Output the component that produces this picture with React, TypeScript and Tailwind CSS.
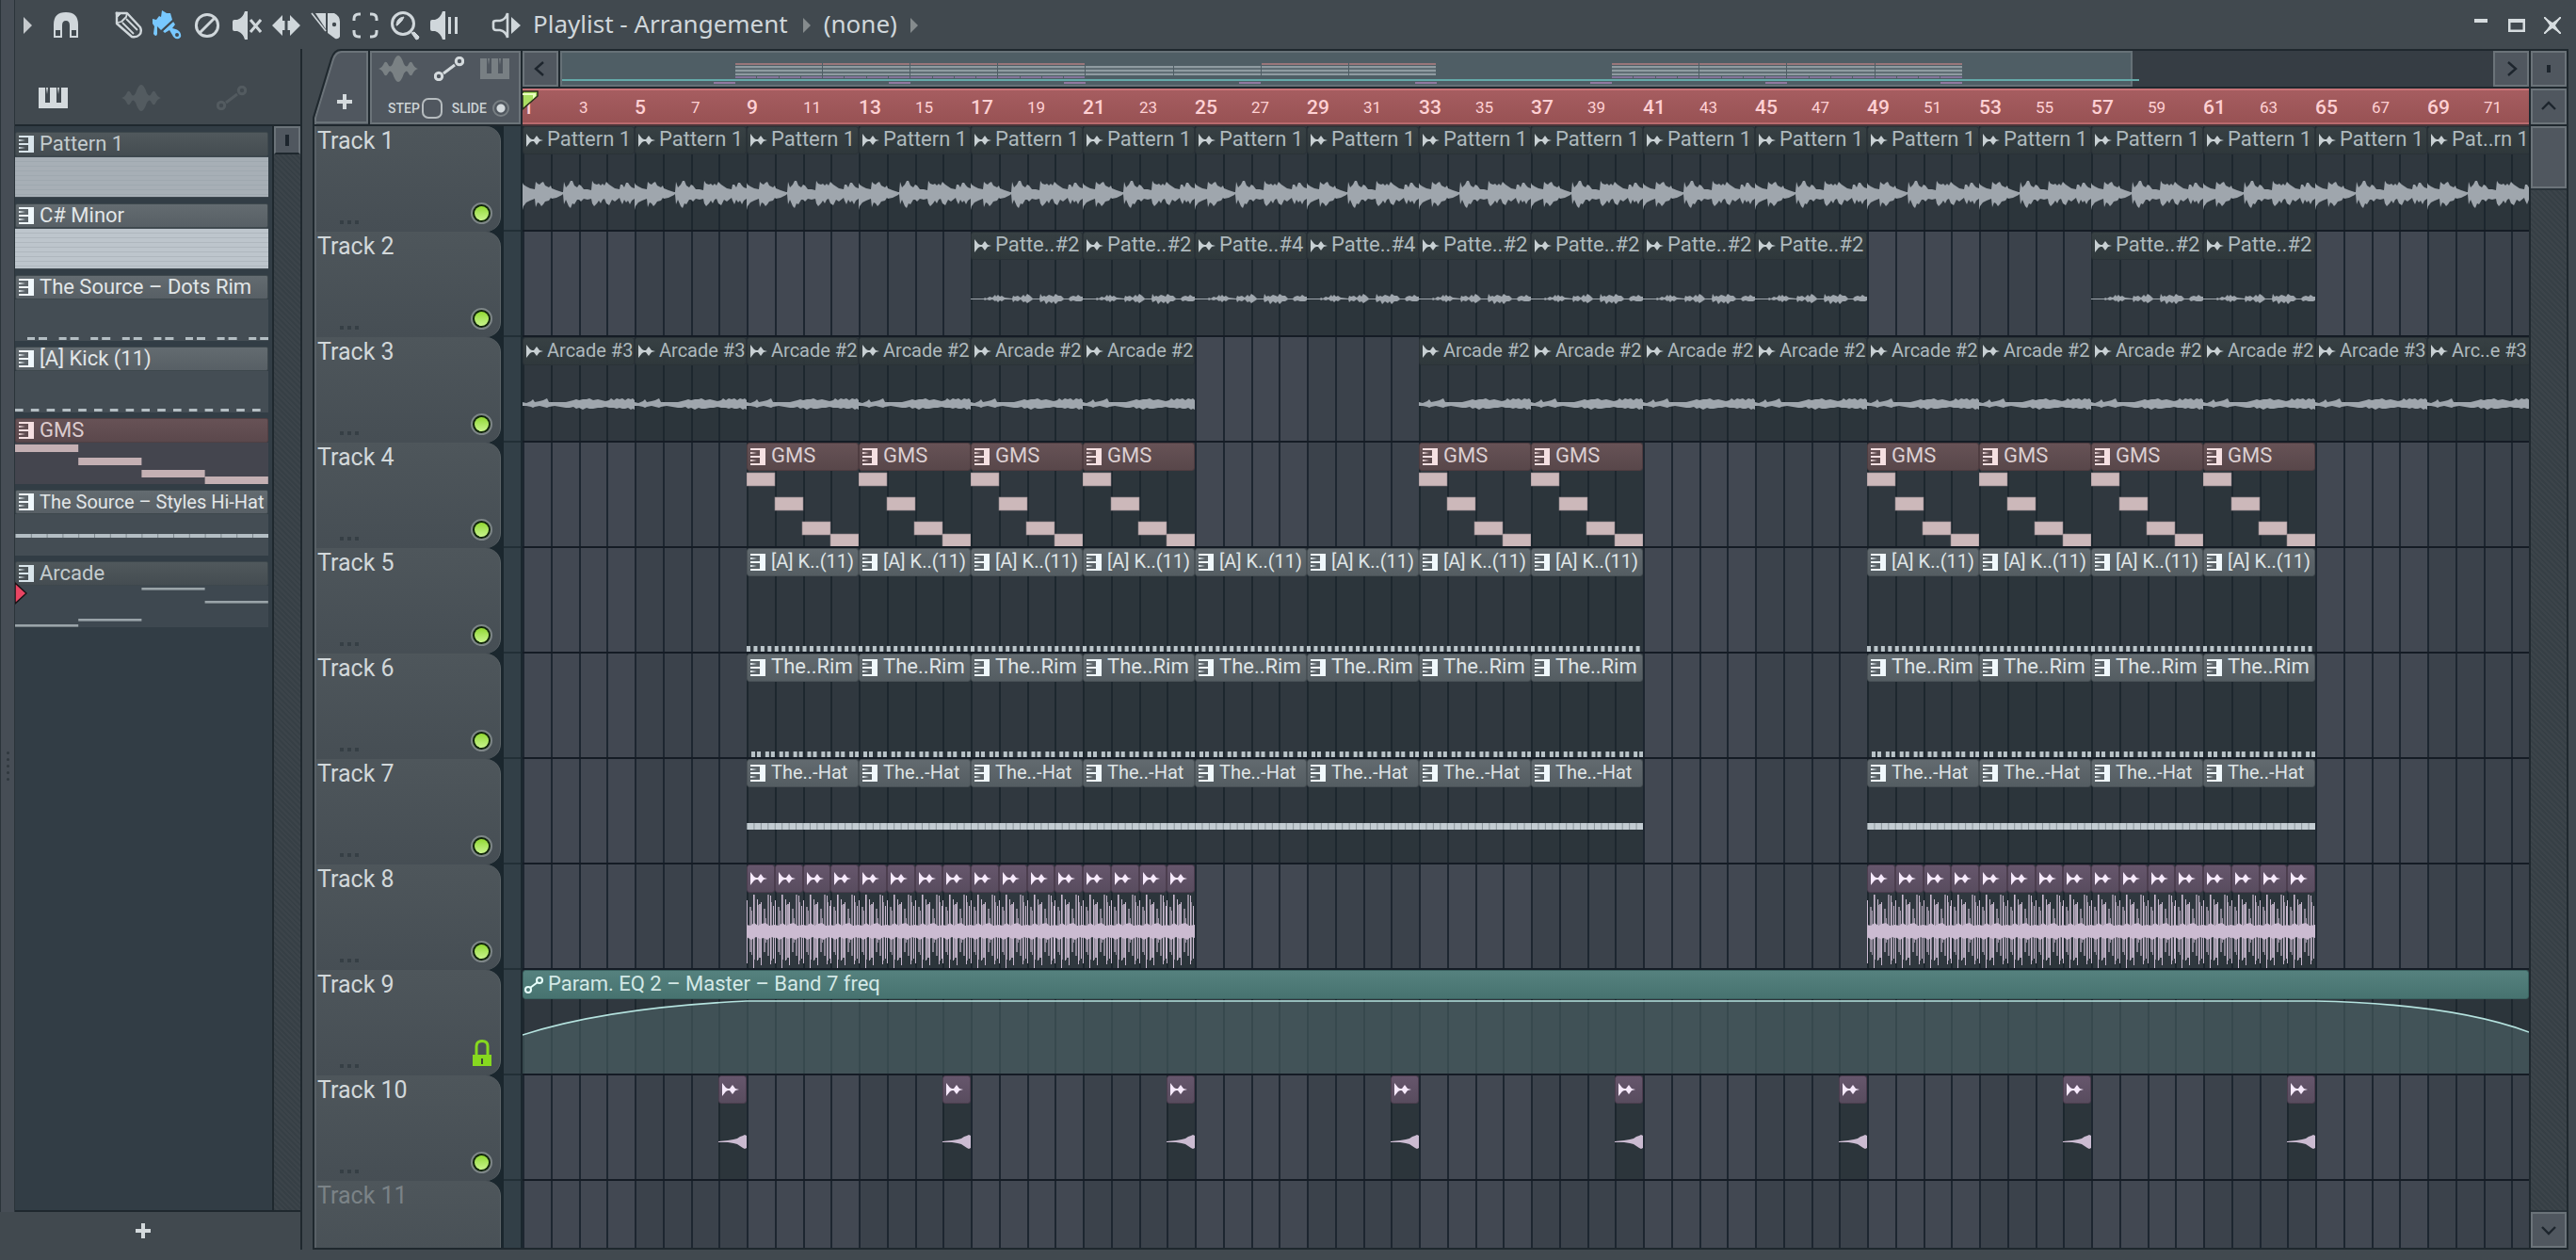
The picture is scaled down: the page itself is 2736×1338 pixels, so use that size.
import type { ReactNode } from "react";
import clsx from "clsx";

type ClipKind = "audio" | "audioPink" | "pattern" | "gms" | "sweep";
type Art = "wave1" | "wave2" | "wave3" | "gms" | "kick" | "rim" | "hat" | "perc" | "riser";

interface Clip {
  bar: number;
  bars: number;
  label?: string;
}

interface Track {
  name: string;
  kind?: ClipKind;
  art?: Art;
  clips: Clip[];
  locked?: boolean;
  dim?: boolean;
  small?: boolean;
}

// four bars are 119px wide
const barX = (bar: number) => Math.round(((bar - 1) * 119) / 4);

const run = (from: number, to: number, label?: string, step = 4): Clip[] => {
  const clips: Clip[] = [];
  for (let bar = from; bar <= to; bar += step) clips.push({ bar, bars: step, label });
  return clips;
};

const RISER_BARS = [8, 16, 24, 32, 40, 48, 56, 64];

const TRACKS: Track[] = [
  {
    name: "Track 1",
    kind: "audio",
    art: "wave1",
    clips: [...run(1, 65, "Pattern 1"), ...run(69, 69, "Pat..rn 1")],
  },
  {
    name: "Track 2",
    kind: "audio",
    art: "wave2",
    clips: [
      ...run(17, 21, "Patte..#2"),
      ...run(25, 29, "Patte..#4"),
      ...run(33, 45, "Patte..#2"),
      ...run(57, 61, "Patte..#2"),
    ],
  },
  {
    name: "Track 3",
    kind: "audio",
    art: "wave3",
    small: true,
    clips: [
      ...run(1, 5, "Arcade #3"),
      ...run(9, 21, "Arcade #2"),
      ...run(33, 61, "Arcade #2"),
      ...run(65, 65, "Arcade #3"),
      ...run(69, 69, "Arc..e #3"),
    ],
  },
  {
    name: "Track 4",
    kind: "gms",
    art: "gms",
    clips: [...run(9, 21, "GMS"), ...run(33, 37, "GMS"), ...run(49, 61, "GMS")],
  },
  {
    name: "Track 5",
    kind: "pattern",
    art: "kick",
    small: true,
    clips: [...run(9, 37, "[A] K..(11)"), ...run(49, 61, "[A] K..(11)")],
  },
  {
    name: "Track 6",
    kind: "pattern",
    art: "rim",
    clips: [...run(9, 37, "The..Rim"), ...run(49, 61, "The..Rim")],
  },
  {
    name: "Track 7",
    kind: "pattern",
    art: "hat",
    small: true,
    clips: [...run(9, 37, "The..-Hat"), ...run(49, 61, "The..-Hat")],
  },
  {
    name: "Track 8",
    kind: "audioPink",
    art: "perc",
    clips: [...run(9, 24, undefined, 1), ...run(49, 64, undefined, 1)],
  },
  { name: "Track 9", kind: "sweep", clips: [], locked: true },
  {
    name: "Track 10",
    kind: "audioPink",
    art: "riser",
    clips: RISER_BARS.map((bar) => ({ bar, bars: 1 })),
  },
  { name: "Track 11", clips: [], dim: true },
];

const PATTERNS = [
  { name: "Pattern 1", tone: "dull", art: "solidDark" },
  { name: "C# Minor", tone: "bright", art: "solidLight" },
  { name: "The Source – Dots Rim", tone: "bright", art: "rim" },
  { name: "[A] Kick (11)", tone: "bright", art: "kick" },
  { name: "GMS", tone: "gms", art: "gms" },
  { name: "The Source – Styles Hi-Hat", tone: "bright", art: "hat", small: true },
  { name: "Arcade", tone: "dull", art: "arcade", selected: true },
];

/* ---------- wave forms ---------- */

// [x, above, below] for one four-bar clip
type Env = [number, number, number][];

const ENV_1: Env = [
  [0, 11, 18], [1, 9, 14], [4, 7, 10], [8, 5, 8], [13, 4, 6], [14, 12, 15], [16, 10, 10], [18, 9, 11],
  [20, 11, 14], [22, 12, 12], [24, 8, 9], [28, 6, 8], [30, 8, 5], [31, 5, 6], [36, 3, 5], [42, 1, 2],
  [43, 1, 1], [44, 12, 12], [46, 6, 7], [49, 9, 14], [51, 13, 16], [53, 13, 11], [55, 8, 12], [58, 6, 7],
  [60, 9, 7], [62, 8, 9], [65, 4, 6], [69, 4, 7], [73, 3, 6], [74, 13, 11], [76, 10, 14], [79, 9, 11],
  [81, 10, 8], [83, 8, 11], [85, 10, 7], [87, 8, 6], [89, 12, 11], [92, 9, 13], [95, 7, 7], [98, 5, 9],
  [103, 4, 5], [104, 9, 8], [106, 9, 12], [108, 6, 7], [110, 11, 10], [112, 11, 8], [114, 8, 12],
  [116, 6, 8], [119, 5, 6],
];

const ENV_2: Env = [
  [0, 0, 1], [14, 0, 1], [15, 1, 2], [17, 0, 1], [20, 2, 2], [23, 1, 1], [26, 4, 3], [27, 2, 2], [29, 4, 4],
  [31, 2, 2], [33, 3, 3], [36, 1, 1], [44, 0, 1], [45, 3, 4], [47, 2, 2], [50, 3, 3], [53, 1, 1], [56, 4, 4],
  [58, 2, 3], [60, 5, 5], [63, 3, 3], [66, 0, 1], [73, 0, 1], [74, 5, 4], [76, 2, 3], [78, 3, 2], [80, 2, 6],
  [83, 4, 3], [86, 3, 5], [88, 2, 3], [90, 5, 6], [93, 3, 3], [96, 3, 3], [99, 0, 1], [104, 0, 1],
  [106, 2, 3], [109, 3, 2], [112, 2, 3], [114, 4, 3], [117, 2, 3], [119, 2, 2],
];

const ENV_3: Env = [
  [0, 2, 2], [4, 1, 2], [9, 3, 3], [11, 5, 4], [13, 2, 3], [18, 3, 2], [22, 4, 3], [26, 6, 4], [28, 2, 3],
  [34, 2, 2], [40, 2, 3], [46, 2, 4], [50, 3, 4], [54, 4, 3], [57, 5, 5], [60, 4, 4], [64, 5, 6], [68, 5, 4],
  [71, 6, 5], [75, 4, 5], [80, 5, 4], [84, 4, 4], [88, 3, 3], [92, 4, 4], [94, 6, 4], [97, 4, 4], [100, 6, 5],
  [103, 5, 4], [106, 6, 5], [109, 4, 5], [112, 6, 4], [115, 5, 6], [117, 6, 5], [119, 4, 6],
];

const envPath = (env: Env, mid: number) =>
  "M" +
  env.map(([x, up]) => `${x} ${mid - up}`).join("L") +
  "L" +
  [...env].reverse().map(([x, , down]) => `${x} ${mid + down}`).join("L") +
  "Z";

// [x, width, above, below, opacity] for one bar of track 8
const SPIKES = [
  [0, 1, 33, 34, 1], [3, 2, 26, 22, 0.6], [5, 1, 22, 25, 0.7], [7, 1, 39, 40, 1], [8, 1, 39, 30, 0.6],
  [11, 1, 34, 31, 1], [12, 1, 28, 30, 0.6], [13, 2, 29, 28, 0.8], [15, 1, 31, 36, 1], [18, 2, 24, 22, 0.6],
  [20, 1, 14, 12, 0.7], [22, 2, 39, 26, 0.6], [25, 1, 38, 35, 1], [26, 1, 31, 31, 0.6], [28, 1, 27, 29, 1],
];

const steps = (n: number) => Array.from({ length: n }, (_, i) => i);

function ClipArt({ art }: { art: Art }) {
  const one = art === "perc" || art === "riser";
  return (
    <svg
      viewBox={one ? "0 0 30 82" : "0 0 119 82"}
      className={one ? "block h-[82px] w-[30px]" : "block h-[82px] w-[119px]"}
      aria-hidden="true"
    >
      {art === "wave1" && <path d={envPath(ENV_1, 41)} fill="#9fa6ad" />}
      {art === "wave2" && <path d={envPath(ENV_2, 41)} fill="#9fa6ad" />}
      {art === "wave3" && <path d={envPath(ENV_3, 41)} fill="#9fa6ad" />}
      {art === "gms" &&
        [2, 28, 54, 67].map((y, i) => (
          <rect key={y} x={i * 30 - (i > 1 ? 1 : 0)} y={y} width="30" height="14" fill="#ccb8ba" stroke="#8d8186" strokeWidth=".6" />
        ))}
      {art === "kick" &&
        steps(16).map((i) => <rect key={i} x={(i * 119) / 16} y="74" width="4" height="7" fill="#bcc6cb" />)}
      {art === "rim" &&
        steps(8).map((i) => (
          <g key={i} fill="#b9c3c8">
            <rect x={5 + (i * 119) / 8} y="74" width="4" height="7" />
            <rect x={11 + (i * 119) / 8} y="74" width="4" height="7" />
          </g>
        ))}
      {art === "hat" && (
        <>
          <rect y="38" width="119" height="7" fill="#c3ccd2" />
          {steps(16).map((i) => (
            <rect key={i} x={(i * 119) / 16} y="38" width="1" height="7" fill="#8b959b" />
          ))}
        </>
      )}
      {art === "perc" && (
        <g fill="#cbbbd1">
          <path d="M0 34L4 35L8 32L12 35L16 33L20 32L24 35L30 34V48L26 47L22 50L18 48L14 49L10 47L5 50L0 47Z" />
          {SPIKES.map(([x, w, up, down, o]) => (
            <rect key={x} x={x} y={41 - up} width={w} height={up + down} opacity={o} />
          ))}
        </g>
      )}
      {art === "riser" && (
        <path d="M0 40L10 39L16 38L20 37L23 35L26 34L28 33L30 34V47L28 48L26 47L23 45L20 43L16 42L10 41L0 41Z" fill="#cbbbd1" />
      )}
    </svg>
  );
}

/* ---------- icons ---------- */

function Svg({ w, h, children, className }: { w: number; h: number; children: ReactNode; className?: string }) {
  return (
    <svg width={w} height={h} viewBox={`0 0 ${w} ${h}`} className={clsx("shrink-0", className)} aria-hidden="true">
      {children}
    </svg>
  );
}

const AudioIcon = ({ color }: { color: string }) => (
  <Svg w={18} h={14}>
    <path d="M0 0L4 5L6 6H8L11 2L14 6L18 7L14 8L11 12L8 8H6L4 9L0 14Z" fill={color} />
  </Svg>
);

const KeysIcon = ({ color }: { color: string }) => (
  <Svg w={16} h={18}>
    <path d="M0 0H16V18H0V16H10V10H0V8H10V2H0ZM0 4L7 5L0 6ZM0 12L7 13L0 14Z" fill={color} />
  </Svg>
);

const PianoIcon = ({ color }: { color: string }) => (
  <Svg w={31} h={22}>
    <path d="M0 0H7V16H12V0H19V16H24V0H31V22H0ZM8 0H10L9 7ZM20 0H22L21 7Z" fill={color} />
  </Svg>
);

const WaveIcon = ({ color }: { color: string }) => (
  <Svg w={42} h={28}>
    <path
      d="M0 14Q4 13 6 8Q8 5 10 9Q12 14 15 9Q18 0 21 0Q24 0 27 9Q30 14 32 9Q34 5 36 8Q38 13 42 14Q38 15 36 20Q34 23 32 19Q30 14 27 19Q24 28 21 28Q18 28 15 19Q12 14 10 19Q8 23 6 20Q4 15 0 14Z"
      fill={color}
    />
  </Svg>
);

const LinkIcon = ({ color }: { color: string }) => (
  <Svg w={32} h={26}>
    <g fill="none" stroke={color} strokeWidth="3">
      <circle cx="5" cy="21" r="3.7" />
      <circle cx="27" cy="5" r="3.7" />
      <path d="M10 18L22 9" />
    </g>
  </Svg>
);

const SmallLinkIcon = () => (
  <Svg w={21} h={18}>
    <g fill="none" stroke="#e8fffc" strokeWidth="2">
      <circle cx="4" cy="14" r="3" />
      <circle cx="16" cy="4" r="3" />
      <path d="M6 12L14 6" />
    </g>
  </Svg>
);

const PlusIcon = () => (
  <Svg w={16} h={16}>
    <path d="M6 0H10V6H16V10H10V16H6V10H0V6H6Z" fill="#d4dadd" />
  </Svg>
);

const C = "#d0d7db";

const TOOLS: { name: string; icon: ReactNode }[] = [
  {
    name: "Draw",
    icon: (
      <g fill="none" stroke={C} strokeWidth="2.4" strokeLinejoin="round">
        <path d="M4 3H15L29 18Q31 23 28 26Q25 29 20 28L4 14Z" />
        <path d="M5 13L9 12L14 7L15 3" strokeWidth="1.8" />
        <path d="M10 13L22 25M14 9L26 21" strokeWidth="1.8" />
        <path d="M3 2L9 3L4 8Z" fill={C} strokeWidth="1" />
      </g>
    ),
  },
  {
    name: "Paint",
    icon: (
      <g fill="#78c8ff">
        <path d="M0 9L4 10L7 6L9 7L10 0L15 3L19 3L21 10L9 21L5 17L5 25Q4 29 1 25L2 17L0 14Z" />
        <path d="M11 22L22 12L24 15L21 19Q27 20 29 23Q32 28 28 30Q23 31 21 26L18 21L13 24Z" />
        <path d="M10 22L22 11" stroke="#41494f" strokeWidth="1.4" />
        <circle cx="26" cy="26" r="2" fill="#41494f" />
      </g>
    ),
  },
  {
    name: "Delete",
    icon: (
      <g fill="none" stroke={C} strokeWidth="3">
        <circle cx="16" cy="16" r="11.6" />
        <path d="M8 24L24 8" />
      </g>
    ),
  },
  {
    name: "Mute",
    icon: (
      <g fill={C}>
        <path d="M1 12Q1 10 3 10H6Q12 8 14 1H17V31H14Q12 24 6 22H3Q1 22 1 20Z" />
        <path d="M20 10L31 23M31 10L20 23" stroke={C} strokeWidth="3" fill="none" />
      </g>
    ),
  },
  {
    name: "Slip",
    icon: <path d="M1 16L12 5V11H14.5V21H12V27ZM31 16L20 5V11H17.5V21H20V27Z" fill={C} />,
  },
  {
    name: "Slice",
    icon: (
      <g fill={C}>
        <path d="M5 3H16V20Z" />
        <path d="M1 3L16 22" stroke={C} strokeWidth="1.6" />
        <path d="M18 3H25Q31 6 31 12V28Q29 31 26 30L18 24Z" />
        <circle cx="25" cy="15" r="2.2" fill="#41494f" />
      </g>
    ),
  },
  {
    name: "Select",
    icon: (
      <path d="M4 11V9Q4 4 9 4H11M21 4H23Q28 4 28 9V11M28 21V23Q28 28 23 28H21M11 28H9Q4 28 4 23V21" fill="none" stroke={C} strokeWidth="3" />
    ),
  },
  {
    name: "Zoom",
    icon: (
      <g fill="none" stroke={C}>
        <circle cx="14" cy="14" r="11.5" strokeWidth="3" />
        <path d="M7 16Q7 8 15 7Q14 11 8 16Z" fill={C} strokeWidth="1" />
        <path d="M23 24L26 23L31 28Q31 31 28 31Z" fill={C} strokeWidth="1" />
      </g>
    ),
  },
  {
    name: "Playback",
    icon: (
      <g fill={C}>
        <path d="M1 12Q1 10 3 10H6Q12 8 14 1H17V31H14Q12 24 6 22H3Q1 22 1 20Z" />
        <path d="M20 7H23V25H20ZM27 7H30V25H27Z" />
      </g>
    ),
  },
];

function Led() {
  return (
    <button
      aria-label="Mute track"
      className="flex size-[23px] items-center justify-center rounded-full border-2 border-[#7d8587] bg-[#12260c]"
    >
      <span className="size-[15px] rounded-full bg-linear-to-b from-[#92d92c] to-[#c8f48a]" />
    </button>
  );
}

function Lock() {
  return (
    <button aria-label="Unlock track" className="mr-px mb-0.5">
      <Svg w={20} h={28}>
        <path d="M4 16V7Q4 1.5 10 1.5Q16 1.5 16 7V16" fill="none" stroke="#86d81f" strokeWidth="3" />
        <path d="M0 16H20V28H0Z" fill="#86d81f" />
        <path d="M9 20H11V26H9Z" fill="#3b4a33" />
      </Svg>
    </button>
  );
}

/* ---------- left panel ---------- */

function PatternArt({ art }: { art: string }) {
  const w = 269;
  return (
    <svg viewBox="0 0 269 44" preserveAspectRatio="none" className="block h-11 w-full" aria-hidden="true">
      {(art === "solidDark" || art === "solidLight") && (
        <>
          <rect y="1" width={w} height="42" fill={art === "solidDark" ? "#a7afb6" : "#bdc5cc"} />
          {steps(8).map((i) => (
            <rect key={i} y={5 + i * 5} width={w} height="1" fill="#8f99a0" opacity=".3" />
          ))}
        </>
      )}
      {art === "rim" &&
        steps(8).map((i) => (
          <g key={i} fill="#b4bec3">
            <rect x={13 + i * 33.6} y="40" width="8" height="3" />
            <rect x={25 + i * 33.6} y="40" width="9" height="3" />
          </g>
        ))}
      {art === "kick" &&
        steps(16).map((i) => <rect key={i} x={i * 16.8} y="40" width="8.6" height="3" fill="#b4bec3" />)}
      {art === "gms" &&
        [2, 16, 29, 36].map((y, i) => <rect key={y} x={i * 67.2} y={y} width="67.2" height="8" fill="#c4b0b3" />)}
      {art === "hat" && (
        <>
          <rect y="21" width={w} height="4" fill="#b4bec4" />
          {steps(16).map((i) => (
            <rect key={i} x={i * 16.8} y="21" width="1" height="4" fill="#7d878d" />
          ))}
        </>
      )}
      {art === "arcade" &&
        [41, 35, 2, 16].map((y, i) => <rect key={y} x={i * 67.2} y={y} width="67.2" height="2.6" fill="#9aa4a9" />)}
    </svg>
  );
}

function PatternPanel() {
  return (
    <aside className="flex w-[305px] shrink-0 flex-col border-r-2 border-[#1f282e]">
      <div className="flex h-20 shrink-0 items-center pt-6">
        <button aria-label="Patterns" className="flex w-20 justify-center">
          <PianoIcon color="#d4dadd" />
        </button>
        <button aria-label="Audio" className="ml-8 flex w-11 justify-center">
          <WaveIcon color="#535b60" />
        </button>
        <button aria-label="Automation" className="ml-14 flex w-9 justify-center">
          <LinkIcon color="#535b60" />
        </button>
      </div>
      <div className="flex min-h-0 flex-1 border-y-2 border-[#1f282e]">
        <ul className="flex-1 overflow-hidden bg-[#323d45] pt-1.5 pr-1">
          {PATTERNS.map((p) => (
            <li key={p.name} className="relative mb-1.5">
              <div
                className={clsx(
                  "flex h-[26px] items-center rounded-[2px] border border-[#3d474c] pl-[3px]",
                  p.tone === "dull" && "bg-linear-to-b from-[#50585c] to-[#444c51] text-[#c3cbce]",
                  p.tone === "bright" && "bg-linear-to-b from-[#636b70] to-[#575f65] text-[#e2e6e8]",
                  p.tone === "gms" && "border-[#513f43] bg-linear-to-b from-[#675256] to-[#5b484c] text-[#dcccce]",
                )}
              >
                <KeysIcon color={p.tone === "gms" ? "#f5dfe1" : p.tone === "dull" ? "#d8e4ea" : "#f0f8fc"} />
                <span className={clsx("ml-1.5 leading-6 whitespace-nowrap", p.small ? "text-xl" : "text-[22px]")}>
                  {p.name}
                </span>
              </div>
              <div className={clsx(p.tone === "gms" ? "bg-[#44454e]" : p.tone === "dull" ? "bg-[#3e4850]" : "bg-[#444d54]")}>
                <PatternArt art={p.art} />
              </div>
              {p.selected && (
                <svg width="13" height="24" viewBox="0 0 13 24" className="absolute top-[22px] left-0" aria-hidden="true">
                  <path d="M0 1L12 12L0 23Z" fill="#ea4563" stroke="#1a1114" strokeWidth="1.5" />
                </svg>
              )}
            </li>
          ))}
        </ul>
        <div className="w-[30px] border-l-2 border-[#1f282e] bg-[repeating-linear-gradient(45deg,#363f45_0_2px,#3c444a_2px_4px)]">
          <div className="flex h-[30px] items-center justify-center border-2 border-b-[#1f282e] border-[#6b7379] bg-[#50575f]">
            <span className="h-3 w-1 bg-[#1d252d]" />
          </div>
        </div>
      </div>
      <button aria-label="Add pattern" className="flex h-10 shrink-0 items-center justify-center pr-8">
        <PlusIcon />
      </button>
    </aside>
  );
}

/* ---------- playlist header ---------- */

function HeaderTools() {
  return (
    <div className="flex w-[223px] shrink-0 border-r-2 border-b-2 border-[#1f282e]">
      <button aria-label="Add track" className="relative h-20 w-[59px] shrink-0">
        <svg viewBox="0 0 59 80" className="absolute inset-0 size-full" aria-hidden="true">
          <path d="M1 80V73L20 10Q23 1 30 1H59V80Z" fill="#50575f" />
          <path d="M3 80V73L22 11Q25 3 31 3H58V78H3" fill="none" stroke="#6b7379" strokeWidth="2" />
          <path d="M1 80V73L20 10Q23 1 30 1H59" fill="none" stroke="#1f282e" strokeWidth="2" />
        </svg>
        <span className="relative flex justify-center pt-8 pl-2">
          <PlusIcon />
        </span>
      </button>
      <div className="flex flex-1 flex-col border-t-2 border-l-2 border-[#1f282e]">
        <div className="flex flex-1 flex-col justify-between border-2 border-[#6b7379] bg-[#50575f] pb-1">
          <div className="flex h-[34px] items-center justify-between pr-2.5 pl-[7px]">
            <WaveIcon color="#7a8184" />
            <LinkIcon color="#d4dadd" />
            <PianoIcon color="#787f83" />
          </div>
          <div className="flex items-center pl-[17px] text-sm font-medium text-[#ccd2d5]">
            <label htmlFor="step">STEP</label>
            <input
              id="step"
              type="checkbox"
              className="ml-0.5 size-[22px] appearance-none rounded-[7px] border-2 border-[#b6bcbf]"
            />
            <label htmlFor="slide" className="ml-2.5">
              SLIDE
            </label>
            <input
              id="slide"
              type="radio"
              defaultChecked
              className="ml-1.5 size-[18px] appearance-none rounded-full border-2 border-[#787f83] bg-[radial-gradient(circle,#d4dadd_0_4px,#50575f_5px)]"
            />
          </div>
        </div>
      </div>
    </div>
  );
}

const mapX = (bar: number) => Math.round(186 + (bar - 9) * 23.28);

function Overview() {
  const span = (from: number, to: number, y: number, h: number, fill: string, every = 4) => {
    const parts: ReactNode[] = [];
    for (let b = from; b < to; b += every)
      parts.push(
        <rect key={`${b}-${y}`} x={mapX(b)} y={y} width={mapX(b + every) - mapX(b) - 1} height={h} fill={fill} />,
      );
    return parts;
  };
  return (
    <div className="h-full flex-1 overflow-hidden border-l-2 border-[#1f282e] bg-[#363d44]">
      <svg width="1680" height="38" viewBox="0 0 1680 38" className="block" aria-hidden="true">
        <rect x="1" y="1" width="1668" height="36" fill="#4f5e65" stroke="#667177" strokeWidth="2" />
        {[[9, 25], [33, 41], [49, 65]].map(([a, b]) => span(a, b, 13, 2, "#99777b"))}
        {[16, 20, 24].map((y) => [span(9, 41, y, 2, "#8f9ba1"), span(49, 65, y, 2, "#8f9ba1")])}
        {[18, 22].map((y) => [span(9, 41, y, 2, "#5f6d74"), span(49, 65, y, 2, "#5f6d74")])}
        {span(9, 25, 27, 2, "#84759a", 1)}
        {span(49, 65, 27, 2, "#84759a", 1)}
        <rect x="2" y="30" width="1675" height="2" fill="#64aaa9" />
        {RISER_BARS.map((b) => (
          <rect key={b} x={mapX(b)} y="33" width="23" height="2" fill="#9079a0" />
        ))}
      </svg>
    </div>
  );
}

function ScrollButton({ label, d, className }: { label: string; d: string; className?: string }) {
  return (
    <button
      aria-label={label}
      className={clsx("flex size-[38px] shrink-0 items-center justify-center border-2 border-[#6b7379] bg-[#50575f]", className)}
    >
      <Svg w={18} h={18}>
        <path d={d} fill="none" stroke="#1d252d" strokeWidth="2.4" />
      </Svg>
    </button>
  );
}

function Ruler() {
  return (
    <div className="relative flex h-[38px] items-end overflow-hidden border-y-2 border-t-[#c87377] border-b-[#b86a6d] bg-linear-to-b from-[#a65d60] to-[#985254] text-[#ffd0d3]">
      {steps(36).map((i) => {
        const major = i % 2 === 0;
        return (
          <span
            key={i}
            className={clsx("shrink-0 leading-8", major ? "w-[60px] text-[21px] font-medium" : "w-[59px] text-[17px]")}
          >
            {i * 2 + 1}
          </span>
        );
      })}
      <svg width="18" height="22" viewBox="0 0 18 22" className="absolute top-0 left-0" aria-hidden="true">
        <path d="M0 1H16V6L0 20Z" fill="#a9de62" stroke="#2a2f1c" strokeWidth="1.5" />
        <path d="M0 3H14V6L11 9V5H0Z" fill="#e9ffc0" />
      </svg>
    </div>
  );
}

/* ---------- tracks ---------- */

const HEADS: Record<ClipKind, string> = {
  audio: "border-[#2a3237] bg-linear-to-b from-[#384144]/95 to-[#2f383b]/90 text-[#aeb9bd]",
  audioPink: "border-[#4b3d4e] bg-linear-to-b from-[#66566c] to-[#584c5e] text-[#f4e6f8]",
  pattern: "border-[#495156] bg-linear-to-b from-[#626a6f] to-[#545d62] text-[#dfe4e6]",
  gms: "border-[#4e3c40] bg-linear-to-b from-[#675256] to-[#58474a] text-[#dccfd1]",
  sweep: "border-[#3b6361] bg-linear-to-b from-[#55817e] to-[#477370] text-[#d3e8e6]",
};

const LANE_GRID =
  "bg-[repeating-linear-gradient(90deg,#1d2630_0_2px,transparent_2px_30px,#1d2630_30px_32px,transparent_32px_60px,#1d2630_60px_62px,transparent_62px_89px,#1d2630_89px_91px,transparent_91px_119px),repeating-linear-gradient(90deg,#424852_0_119px,#3b424b_119px_238px)]";

const CLIP_TEXT = "pb-0.5 leading-6 whitespace-nowrap";

function ClipBox({ clip, kind, art, small }: { clip: Clip; kind: ClipKind; art: Art; small?: boolean }) {
  const keys = kind === "pattern" || kind === "gms";
  return (
    <div
      className="absolute inset-y-0 overflow-hidden bg-[#1e272b]/50"
      style={{ left: barX(clip.bar), width: barX(clip.bar + clip.bars) - barX(clip.bar) }}
    >
      <div className={clsx("flex h-[30px] items-center rounded-[3px] border pl-[3px]", HEADS[kind])}>
        {keys ? (
          <KeysIcon color={kind === "gms" ? "#f5e0e2" : "#f0f8fc"} />
        ) : (
          <AudioIcon color={kind === "audio" ? "#c8d0d3" : "#f6e9fb"} />
        )}
        {clip.label && (
          <span className={clsx(CLIP_TEXT, small ? "text-xl" : "text-[22px]", keys ? "ml-1.5" : "ml-1")}>
            {clip.label}
          </span>
        )}
      </div>
      <ClipArt art={art} />
    </div>
  );
}

function SweepClip() {
  return (
    <div className="absolute inset-0 overflow-hidden bg-[#1e272b]/50">
      <div className={clsx("flex h-[31px] items-center rounded-[3px] border pl-px", HEADS.sweep)}>
        <SmallLinkIcon />
        <span className={clsx(CLIP_TEXT, "ml-1 text-[22px]")}>Param. EQ 2 – Master – Band 7 freq</span>
      </div>
      <svg viewBox="0 0 2131 80" preserveAspectRatio="none" className="block h-20 w-full" aria-hidden="true">
        <path d="M0 38Q90 9 238 2H1904Q2050 5 2131 35V80H0Z" fill="#5f7e80" opacity=".4" />
        <path d="M0 38Q90 9 238 2H1904Q2050 5 2131 35" fill="none" stroke="#b5e3df" strokeWidth="1.6" />
      </svg>
    </div>
  );
}

function TrackRow({ track }: { track: Track }) {
  return (
    <div className="flex h-28 shrink-0 bg-[#1b272e]">
      <div className="flex w-[198px] shrink-0 flex-col justify-between rounded-r-[16px] border-r border-l-2 border-l-[#596167] border-r-[#5b6367] bg-linear-to-b from-[#4e565b] to-[#464e54] pb-2 pl-px">
        <span className={clsx("text-[25px] leading-8", track.dim ? "text-[#7b8387]" : "text-[#d2d8da]")}>
          {track.name}
        </span>
        {!track.dim && (
          <div className="flex items-end justify-between pr-2 pl-6">
            <span className="flex gap-1">
              <i className="size-1 bg-[#363f45]" />
              <i className="size-1 bg-[#363f45]" />
              <i className="size-1 bg-[#363f45]" />
            </span>
            {track.locked ? <Lock /> : <Led />}
          </div>
        )}
      </div>
      <div className="mr-0.5 ml-[3px] w-[18px] shrink-0 border-b-2 border-[#222f36] bg-[#323f47]" />
      <div className={clsx("relative flex-1 overflow-hidden border-b-2 border-[#151c25]", LANE_GRID)}>
        {track.kind === "sweep" && <SweepClip />}
        {track.clips.map((clip) => (
          <ClipBox key={clip.bar} clip={clip} kind={track.kind!} art={track.art!} small={track.small} />
        ))}
      </div>
    </div>
  );
}

function Playlist() {
  return (
    <main className="mr-2 flex min-w-0 flex-1 border-b-2 border-[#1f282e]">
      <div className="flex min-w-0 flex-1 flex-col">
        <div className="flex h-[82px] shrink-0">
          <HeaderTools />
          <div className="flex min-w-0 flex-1 flex-col border-t-2 border-b-2 border-t-[#1f282e] border-b-[#4a3539]">
            <div className="flex h-10 border-b-2 border-[#1f282e]">
              <ScrollButton label="Scroll left" d="M12 2L4 9L12 16" />
              <Overview />
              <ScrollButton label="Scroll right" d="M6 2L14 9L6 16" />
            </div>
            <Ruler />
          </div>
        </div>
        <div className="flex min-h-0 flex-1 flex-col overflow-hidden border-l-2 border-[#1f282e]">
          {TRACKS.map((track) => (
            <TrackRow key={track.name} track={track} />
          ))}
        </div>
      </div>
      <div className="flex w-[42px] shrink-0 flex-col border-x-2 border-t-2 border-[#1f282e] bg-[repeating-linear-gradient(45deg,#363f45_0_2px,#3c444a_2px_4px)]">
        <button
          aria-label="Zoom"
          className="flex size-[38px] shrink-0 items-center justify-center border-2 border-[#6b7379] bg-[#50575f]"
        >
          <span className="h-2 w-1 bg-[#1d252d]" />
        </button>
        <div className="h-0.5 shrink-0 bg-[#1f282e]" />
        <ScrollButton label="Scroll up" d="M2 12L9 5L16 12" />
        <div className="h-0.5 shrink-0 bg-[#1f282e]" />
        <div className="h-[66px] shrink-0 border-2 border-[#6b7379] bg-[#50575f]" />
        <div className="flex-1 border-y-2 border-[#2a333a]" />
        <ScrollButton label="Scroll down" d="M2 6L9 13L16 6" />
      </div>
    </main>
  );
}

function TitleBar() {
  return (
    <header className="flex h-[52px] shrink-0 items-center pt-0.5 pr-4 pl-6">
      <button aria-label="Menu">
        <Svg w={10} h={18}>
          <path d="M1 0L10 9L1 18Z" fill="#c5cacd" />
        </Svg>
      </button>
      <button aria-label="Snap" className="ml-5">
        <Svg w={32} h={32}>
          <path d="M3 29V15Q3 2 16 2Q29 2 29 15V29H20V16Q20 11 16 11Q12 11 12 16V29Z" fill={C} />
          <path d="M5 21H10V27H5ZM22 21H27V27H22Z" fill="#41494f" />
        </Svg>
      </button>
      <div className="ml-[34px] flex gap-2.5">
        {TOOLS.map((t) => (
          <button key={t.name} aria-label={t.name}>
            <Svg w={32} h={32}>{t.icon}</Svg>
          </button>
        ))}
      </div>
      <button aria-label="Preview" className="ml-[34px]">
        <Svg w={32} h={32}>
          <path d="M17 3V29Q15 22 9 21H5Q2 21 2 18V13Q2 11 5 11H9Q15 10 17 3Z" fill="none" stroke={C} strokeWidth="2.6" />
          <path d="M21 7L31 16L21 25Z" fill={C} />
        </Svg>
      </button>
      <h1 className="ml-3 flex items-center font-['Noto_Sans',sans-serif] text-[26px] leading-8 text-[#d0d7db]">
        <span className="pb-1">Playlist - Arrangement</span>
        <Svg w={8} h={16} className="ml-4">
          <path d="M0 0L8 8L0 16Z" fill="#858b8d" />
        </Svg>
        <span className="ml-3.5 pb-1">(none)</span>
        <Svg w={8} h={16} className="ml-3.5">
          <path d="M0 0L8 8L0 16Z" fill="#858b8d" />
        </Svg>
      </h1>
      <div className="ml-auto flex items-center gap-5">
        <button aria-label="Minimize">
          <Svg w={18} h={18}>
            <path d="M2 2H16V6H2Z" fill="#d6dcdf" />
          </Svg>
        </button>
        <button aria-label="Maximize">
          <Svg w={18} h={18}>
            <path d="M0 2H18V16H0ZM2.500 6V13.500H15.500V6Z" fill="#d6dcdf" fillRule="evenodd" />
          </Svg>
        </button>
        <button aria-label="Close">
          <Svg w={18} h={18}>
            <path d="M0 0L9 6L18 0L12 9L18 18L9 12L0 18L6 9Z" fill="#d6dcdf" />
            <path d="M0 0L18 18M18 0L0 18" stroke="#d6dcdf" strokeWidth="2" />
          </Svg>
        </button>
      </div>
    </header>
  );
}

export default function App() {
  return (
    <div className="flex h-screen w-full flex-col overflow-hidden bg-[#41494f] font-['Roboto',sans-serif]">
      <div className="flex min-h-0 flex-1">
        <div className="mb-[51px] flex w-4 shrink-0 flex-col items-center justify-center gap-1 border-x border-[#2b343a] bg-[#464d55] pt-[340px]">
          {steps(5).map((i) => (
            <i key={i} className="size-[3px] rounded-full bg-[#30383e]" />
          ))}
        </div>
        <div className="flex min-w-0 flex-1 flex-col">
          <div className="-ml-4">
            <TitleBar />
          </div>
          <div className="flex min-h-0 flex-1 gap-[11px] pb-[11px]">
            <PatternPanel />
            <Playlist />
          </div>
        </div>
      </div>
    </div>
  );
}
